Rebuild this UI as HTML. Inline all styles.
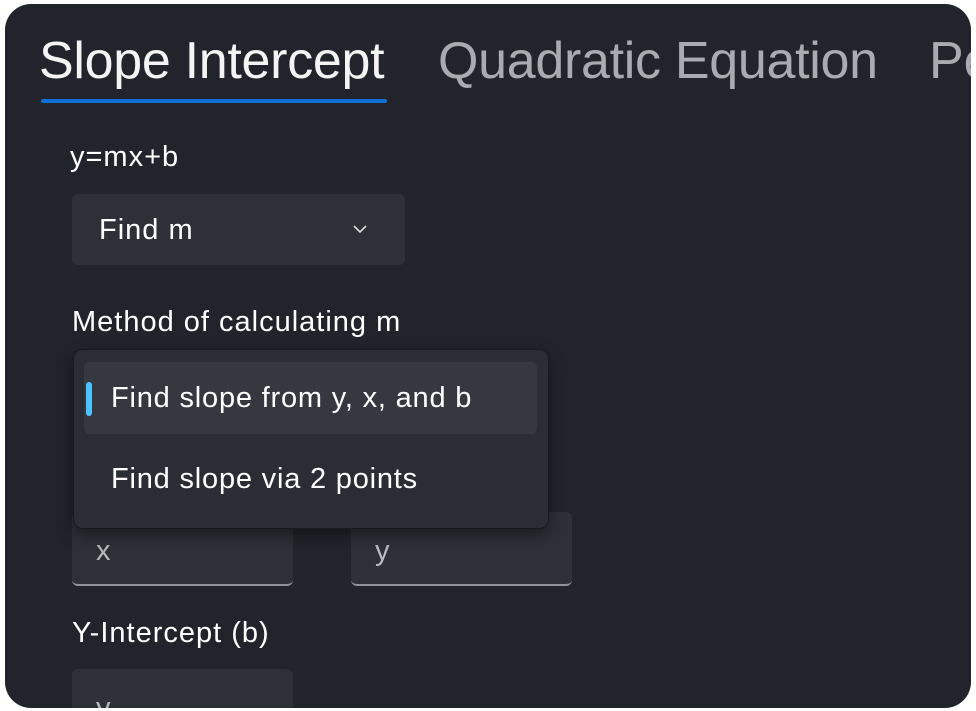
<!DOCTYPE html>
<html><head><style>
*{margin:0;padding:0;box-sizing:border-box}
body{width:976px;height:711px;background:#fff;overflow:hidden;position:relative;font-family:"Liberation Sans",sans-serif;color:#fff}
.win{position:absolute;left:5px;top:4px;width:966px;height:704px;background:#21242b;border-radius:26px;overflow:hidden}
.a{position:absolute;white-space:nowrap}
.tab{font-size:52px;top:27px;line-height:60px;font-weight:300}
.t{font-size:29px;line-height:30px;letter-spacing:1px}
.box{position:absolute;background:#2d3037;border-radius:6px}
</style></head><body>
<div class="win">
<div class="a tab" style="left:34px;color:#f4f4f4;letter-spacing:-0.3px">Slope Intercept</div>
<div class="a tab" style="left:433px;color:#a9abb0;letter-spacing:-0.3px">Quadratic Equation</div>
<div class="a tab" style="left:924px;color:#a9abb0">Pe</div>
<div class="a" style="left:36px;top:95px;width:346px;height:4px;background:#0f6fd4;border-radius:2px"></div>
<div class="a t" style="left:65px;top:138px">y=mx+b</div>
<div class="box" style="left:67px;top:190px;width:333px;height:71px"></div>
<div class="a t" style="left:94px;top:211px">Find m</div>
<svg class="a" style="left:346px;top:219px" width="18" height="12"><path d="M3 3 L9 9 L15 3" stroke="#ddd" stroke-width="1.6" fill="none"/></svg>
<div class="a t" style="left:67px;top:303px">Method of calculating m</div>
<div class="box" style="left:67px;top:508px;width:221px;height:74px;border-bottom:2px solid #8f9196"></div>
<div class="a t" style="left:91px;top:532px;color:#b8babd">x</div>
<div class="box" style="left:346px;top:508px;width:221px;height:74px;border-bottom:2px solid #8f9196"></div>
<div class="a t" style="left:370px;top:532px;color:#b8babd">y</div>
<div class="a t" style="left:67px;top:614px">Y-Intercept (b)</div>
<div class="box" style="left:67px;top:665px;width:221px;height:74px"></div>
<div class="a t" style="left:91px;top:689px;color:#b8babd">y</div>
<div class="a" style="left:68px;top:345px;width:476px;height:180px;background:#2b2d34;border:1px solid #191a1e;border-radius:10px;box-shadow:0 6px 16px rgba(0,0,0,.45)"></div>
<div class="a" style="left:79px;top:358px;width:453px;height:72px;background:#36383f;border-radius:6px"></div>
<div class="a" style="left:81px;top:378px;width:6px;height:34px;background:#4cc2ff;border-radius:3px"></div>
<div class="a t" style="left:106px;top:379px;letter-spacing:0.8px">Find slope from y, x, and b</div>
<div class="a t" style="left:106px;top:460px;letter-spacing:0.8px">Find slope via 2 points</div>
</div>
</body></html>
